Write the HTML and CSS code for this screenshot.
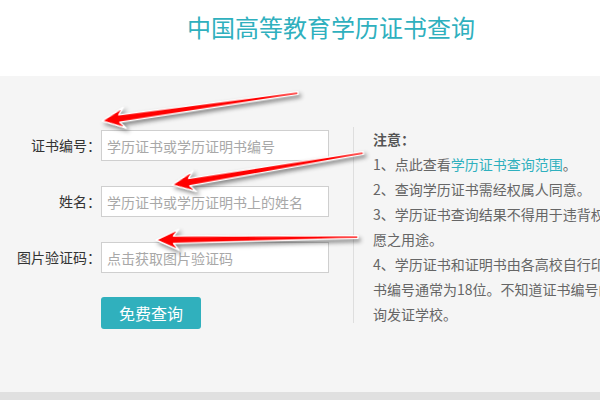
FILE: index.html
```html
<!DOCTYPE html>
<html lang="zh-CN">
<head>
<meta charset="utf-8">
<title>中国高等教育学历证书查询</title>
<link rel="stylesheet" href="styles.css">
</head>
<body>
<header class="top">
  <h1 class="title">中国高等教育学历证书查询</h1>
</header>
<main class="panel">
  <form class="form">
    <div class="row">
      <label class="label">证书编号：</label>
      <input class="field" type="text" placeholder="学历证书或学历证明书编号">
    </div>
    <div class="row">
      <label class="label">姓名：</label>
      <input class="field" type="text" placeholder="学历证书或学历证明书上的姓名">
    </div>
    <div class="row">
      <label class="label">图片验证码：</label>
      <input class="field" type="text" placeholder="点击获取图片验证码">
    </div>
    <div class="actions">
      <button class="btn" type="button">免费查询</button>
    </div>
  </form>
  <div class="notes">
    <p class="notes-title">注意：</p>
    <p>1、点此查看<a class="link" href="#">学历证书查询范围</a>。</p>
    <p>2、查询学历证书需经权属人同意。</p>
    <p>3、学历证书查询结果不得用于违背权利人意愿之用途。</p>
    <p>4、学历证书和证明书由各高校自行印制，证书编号通常为18位。不知道证书编号的，可咨询发证学校。</p>
  </div>
</main>
<footer class="bottom"></footer>
<svg class="arrows" width="600" height="400" viewBox="0 0 600 400" aria-hidden="true">
  <g class="arrow" transform="translate(102,121) rotate(-8.13)">
    <polygon points="0,0 23,-10.5 17.5,-3.8 198,-1.2 198,1.2 17.5,3.8 23,10.5"/>
  </g>
  <g class="arrow" transform="translate(172,185) rotate(-9.51)">
    <polygon points="0,0 23,-10.5 17.5,-3.8 194,-1.2 194,1.2 17.5,3.8 23,10.5"/>
  </g>
  <g class="arrow" transform="translate(156,240) rotate(-0.85)">
    <polygon points="0,0 23,-10.5 17.5,-3.8 202,-1.2 202,1.2 17.5,3.8 23,10.5"/>
  </g>
</svg>
</body>
</html>
```
FILE: styles.css
```css
html, body {
  margin: 0;
  padding: 0;
  width: 600px;
  height: 400px;
  overflow: hidden;
  background: #fff;
  font-family: "Noto Sans CJK SC", "Noto Sans", "Liberation Sans", sans-serif;
  position: relative;
}

.top {
  height: 76px;
  background: #fff;
  box-sizing: border-box;
  padding: 15px 0 0 187px;
}

.title {
  margin: 0;
  font-size: 24px;
  line-height: 24px;
  font-weight: normal;
  color: #2fb0be;
  white-space: nowrap;
}

.panel {
  height: 316px;
  background: #f5f5f5;
  display: flex;
  box-sizing: border-box;
  padding-top: 51px;
}

.form {
  width: 353px;
  flex: none;
  padding-top: 3px;
}

.row {
  display: flex;
  align-items: center;
  height: 31px;
  margin-bottom: 25px;
}

.label {
  width: 101px;
  flex: none;
  text-align: right;
  font-size: 14px;
  color: #333;
  line-height: 31px;
  white-space: nowrap;
}

.field {
  width: 228px;
  height: 31px;
  box-sizing: border-box;
  border: 1px solid #cfcfcf;
  background: #fff;
  padding: 0 5px;
  margin: 0;
  font-family: inherit;
  font-size: 14px;
  color: #333;
  outline: none;
}

.field::placeholder {
  color: #a8a8a8;
}

.actions {
  margin-top: -1px;
  padding-left: 101px;
}

.btn {
  width: 100px;
  height: 32px;
  border: none;
  border-radius: 3px;
  background: #30b0bd;
  color: #fff;
  font-family: inherit;
  font-size: 16px;
  padding: 0;
  margin: 0;
}

.notes {
  width: 306px;
  flex: none;
  height: 196px;
  box-sizing: border-box;
  border-left: 1px solid #dedede;
  padding-left: 19px;
  font-size: 14px;
  line-height: 25px;
  color: #666;
}

.notes p {
  margin: 0;
}

.notes-title {
  font-weight: bold;
  color: #555;
}

.link {
  color: #2fb0be;
  text-decoration: none;
}

.bottom {
  height: 8px;
  background: #e0e0e0;
}

.arrows {
  position: absolute;
  left: 0;
  top: 0;
  pointer-events: none;
}

.arrow polygon {
  fill: #ff0000;
  stroke: #fff;
  stroke-width: 1.4;
  stroke-linejoin: round;
  filter: drop-shadow(2px 3px 2px rgba(0, 0, 0, 0.45));
}
```
